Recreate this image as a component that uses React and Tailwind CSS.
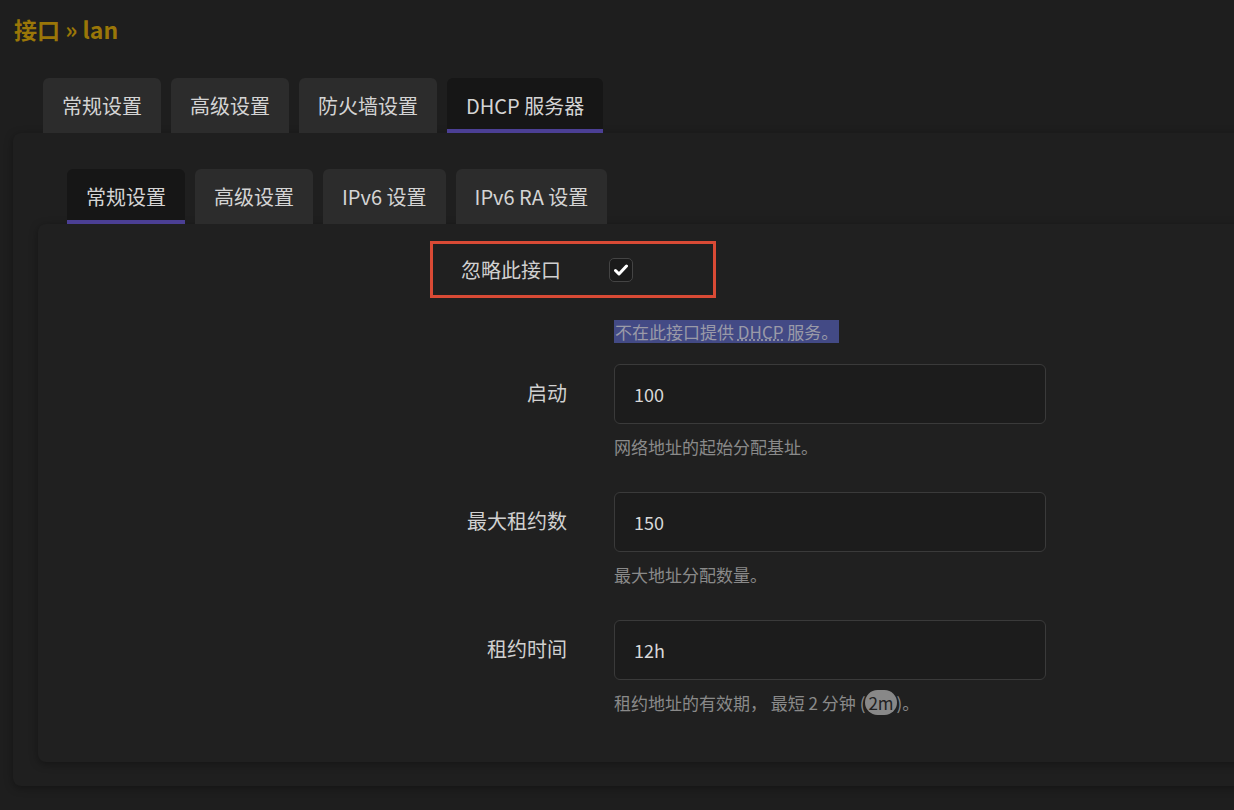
export default function App() {
  const f = { fontFamily: '"Noto Sans CJK SC", "Noto Sans", sans-serif' };
  const Row = ({ label, value, desc, children }) => (
    <div className="flex">
      <div className="w-[576px] pr-[47px] text-right text-[20px] text-[#d0d0d0] pt-[14px]">{label}</div>
      <div>
        <div className="w-[432px] h-[60px] border border-[#3a3a3a] rounded-[6px] bg-[#1c1c1c] px-[19px] flex items-center text-[18px] text-[#d8d8d8]">{value}</div>
        <div className="mt-[10px] text-[17px] text-[#8a8a8a] h-[28px]">{desc || children}</div>
      </div>
    </div>
  );
  const Tab = ({ t, active }) => (
    <div className={`h-[55px] px-[19px] flex items-center rounded-t-[6px] text-[20px] text-[#d4d4d4] ${active ? "bg-[#161616] border-b-[4px] border-[#4b3f94] pt-[4px]" : "bg-[#2c2c2c]"}`}>{t}</div>
  );
  return (
    <div style={f} className="w-[1234px] h-[810px] bg-[#1e1e1e] overflow-hidden">
      <div className="pl-[14px] pt-[14px] text-[23px] font-bold text-[#9a7608] h-[78px] leading-[30px]">接口 » lan</div>
      <div className="pl-[43px] flex gap-[10px]">
        <Tab t="常规设置" /><Tab t="高级设置" /><Tab t="防火墙设置" /><Tab t="DHCP 服务器" active />
      </div>
      <div className="ml-[13px] w-[1240px] h-[653px] bg-[#1f1f1f] rounded-l-[8px] shadow-[0_2px_8px_rgba(0,0,0,0.35)] pt-[36px]">
        <div className="pl-[54px] flex gap-[10px]">
          <Tab t="常规设置" active /><Tab t="高级设置" /><Tab t="IPv6 设置" /><Tab t="IPv6 RA 设置" />
        </div>
        <div className="ml-[25px] h-[538px] bg-[#202020] rounded-l-[8px] shadow-[0_2px_8px_rgba(0,0,0,0.35)] pt-[17px]">
          <div className="flex">
            <div className="ml-[392px] w-[286px] h-[57px] border-[3px] border-[#d94a35] flex items-center">
              <span className="ml-[28px] text-[20px] text-[#d0d0d0]">忽略此接口</span>
              <span className="ml-[48px] w-[24px] h-[24px] rounded-[5px] border border-[#444] bg-[#1a1a1a] flex items-center justify-center">
                <svg width="14" height="12" viewBox="0 0 14 12"><path d="M1.5 6.5 L5 10 L12.5 2" stroke="#fff" strokeWidth="3" fill="none" strokeLinecap="round" strokeLinejoin="round" /></svg>
              </span>
            </div>
          </div>
          <div className="ml-[576px] mt-[22px] mb-[21px] inline-block bg-[#434a85] text-[17px] text-[#9a9aa8] leading-[23px] px-[1px]">不在此接口提供 <span className="underline decoration-dotted">DHCP</span> 服务。</div>
          <div className="flex flex-col gap-[30px]">
            <Row label="启动" value="100" desc="网络地址的起始分配基址。" />
            <Row label="最大租约数" value="150" desc="最大地址分配数量。" />
            <Row label="租约时间" value="12h">租约地址的有效期， 最短 2 分钟 (<span className="bg-[#888] text-[#222] rounded-full px-[3px]">2m</span>)。</Row>
          </div>
        </div>
      </div>
    </div>
  );
}
